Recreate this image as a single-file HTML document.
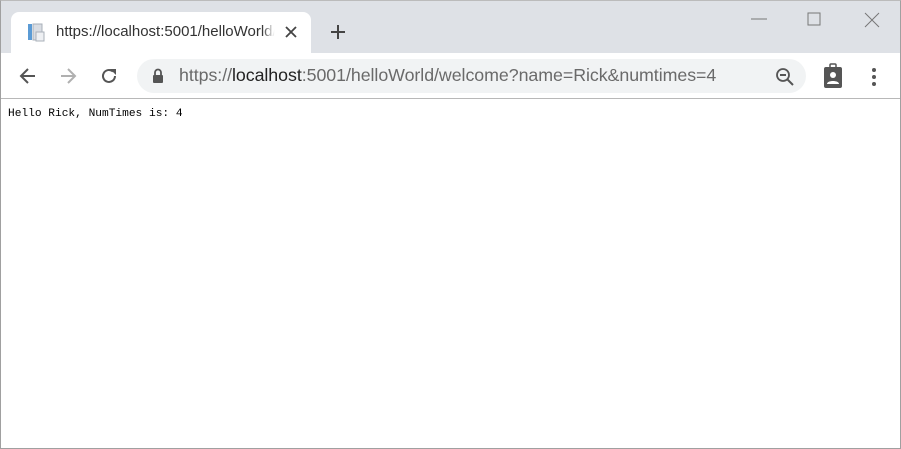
<!DOCTYPE html>
<html><head><style>
*{margin:0;padding:0;box-sizing:border-box}
body{width:901px;height:449px;overflow:hidden;background:#fff;font-family:"Liberation Sans",sans-serif;position:relative}
.frame{position:absolute;left:0;top:0;width:901px;height:449px;border:1px solid #a0a0a0;border-top-color:#bbb}
.strip{position:absolute;left:1px;top:1px;width:899px;height:52px;background:#dee1e6}
.tab{position:absolute;left:11px;top:12px;width:300px;height:41px;background:#fff;border-radius:8px 8px 0 0}
.tabt{position:absolute;left:56px;top:23px;font-size:15px;color:#333;width:220px;white-space:nowrap;overflow:hidden}
.toolbar{position:absolute;left:1px;top:53px;width:899px;height:46px;background:#fff;border-bottom:1px solid #b8b8b8}
.omni{position:absolute;left:137px;top:59px;width:669px;height:34px;background:#f1f3f4;border-radius:17px}
.url{position:absolute;left:179px;top:65px;font-size:17.8px;color:#6a6a6a;white-space:nowrap;letter-spacing:-0.05px}
.url b{font-weight:normal;color:#222}
.content{position:absolute;left:8px;top:108px;font-family:"Liberation Mono",monospace;font-size:11.2px;color:#000}
svg{position:absolute}
</style></head><body>
<div class="strip"></div>
<div class="tab"></div>
<svg style="left:26px;top:23px" width="20" height="20" viewBox="0 0 20 20"><rect x="2" y="1" width="4" height="16" fill="#5b9bd5"/><rect x="7" y="1" width="9" height="16" fill="#d9dde3" stroke="#a9b0ba"/><rect x="10" y="9" width="8" height="9" fill="#eef0f3" stroke="#a9b0ba"/></svg>
<div class="tabt">https://localhost:5001/helloWorld/welcome</div>
<div style="position:absolute;left:262px;top:20px;width:18px;height:24px;background:linear-gradient(90deg,rgba(255,255,255,0),#fff 70%)"></div>
<svg style="left:285px;top:26px" width="12" height="12"><path d="M1 1L11 11M11 1L1 11" stroke="#444" stroke-width="1.8"/></svg>
<svg style="left:330px;top:24px" width="16" height="16"><path d="M8 1V15M1 8H15" stroke="#444" stroke-width="2"/></svg>
<svg style="left:751px;top:18px" width="16" height="2"><path d="M0 1H16" stroke="#777"/></svg>
<svg style="left:807px;top:12px" width="14" height="14"><rect x="1" y="1" width="12" height="12" fill="none" stroke="#777"/></svg>
<svg style="left:864px;top:12px" width="16" height="16"><path d="M1 1L15 15M15 1L1 15" stroke="#777"/></svg>
<div class="toolbar"></div>
<svg style="left:18px;top:66px" width="20" height="20" viewBox="0 0 20 20"><path d="M17 10H4M10 3L3 10L10 17" fill="none" stroke="#555" stroke-width="2"/></svg>
<svg style="left:58px;top:66px" width="20" height="20" viewBox="0 0 20 20"><path d="M3 10H16M10 3L17 10L10 17" fill="none" stroke="#b0b0b0" stroke-width="2"/></svg>
<svg style="left:99px;top:66px" width="20" height="20" viewBox="0 0 20 20"><path d="M16 10A6 6 0 1 1 14 5.5" fill="none" stroke="#555" stroke-width="2"/><path d="M11 3H17V9Z" fill="#555"/></svg>
<div class="omni"></div>
<svg style="left:152px;top:68px" width="12" height="16" viewBox="0 0 12 16"><path d="M3 7V4.5A3 3 0 0 1 9 4.5V7" fill="none" stroke="#555" stroke-width="1.8"/><rect x="1" y="7" width="10" height="8" rx="1" fill="#555"/></svg>
<div class="url">https://<b>localhost</b>:5001/helloWorld/welcome?name=Rick&amp;numtimes=4</div>
<svg style="left:775px;top:67px" width="20" height="20" viewBox="0 0 20 20"><circle cx="8" cy="8" r="6" fill="none" stroke="#555" stroke-width="1.8"/><path d="M5 8H11M12.5 12.5L18 18" stroke="#555" stroke-width="2"/></svg>
<svg style="left:823px;top:63px" width="20" height="26" viewBox="0 0 20 26"><rect x="1" y="4" width="18" height="21" rx="2" fill="#555"/><rect x="7" y="1" width="6" height="6" rx="1" fill="none" stroke="#555" stroke-width="1.5"/><circle cx="10" cy="12" r="3" fill="#fff"/><path d="M4 21C4 17 16 17 16 21Z" fill="#fff"/></svg>
<svg style="left:871px;top:67px" width="6" height="20"><circle cx="3" cy="3" r="2" fill="#555"/><circle cx="3" cy="10" r="2" fill="#555"/><circle cx="3" cy="17" r="2" fill="#555"/></svg>
<div class="content">Hello Rick, NumTimes is: 4</div>
<div class="frame"></div>
</body></html>
